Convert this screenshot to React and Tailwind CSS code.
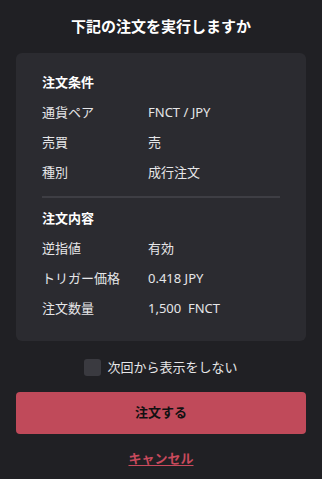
import React from "react";

const Row = ({ label, value }) => (
  <div className="flex h-[30px] items-center text-[13px] text-[#e6e6e8]">
    <div className="w-[106px]">{label}</div>
    <div>{value}</div>
  </div>
);

export default function App() {
  return (
    <div
      className="w-[322px] h-[479px] bg-[#202024] flex flex-col px-4"
      style={{ fontFamily: '"Noto Sans", "Noto Sans CJK JP", sans-serif' }}
    >
      <div className="h-[53px] flex items-center justify-center text-[15px] font-bold text-white pb-[1px]">
        下記の注文を実行しますか
      </div>
      <div className="bg-[#2b2b30] rounded-[6px] px-[26px] pt-[15px] pb-[17px]">
        <div className="flex h-[30px] items-center text-[13px] font-bold text-white">注文条件</div>
        <Row label="通貨ペア" value="FNCT / JPY" />
        <Row label="売買" value="売" />
        <Row label="種別" value="成行注文" />
        <div className="mt-[8px] h-[2px] bg-[#3e3e44]" />
        <div className="mt-[6px] flex h-[30px] items-center text-[13px] font-bold text-white">注文内容</div>
        <Row label="逆指値" value="有効" />
        <Row label="トリガー価格" value="0.418 JPY" />
        <Row label="注文数量" value={<span>1,500&nbsp;&nbsp;FNCT</span>} />
      </div>
      <div className="mt-[18px] h-[17px] flex items-center justify-center gap-[6px]">
        <div className="w-[17px] h-[17px] rounded-[3px] bg-[#3a3a40]" />
        <span className="text-[13px] leading-[17px] text-[#e6e6e8]">次回から表示をしない</span>
      </div>
      <button className="mt-[16px] h-[42px] w-full rounded-[4px] bg-[#c04a5a] text-[13px] font-bold text-[#111]">
        注文する
      </button>
      <div className="mt-[15px] flex justify-center">
        <span className="text-[13px] font-bold text-[#c94a5c] underline underline-offset-2">キャンセル</span>
      </div>
    </div>
  );
}
